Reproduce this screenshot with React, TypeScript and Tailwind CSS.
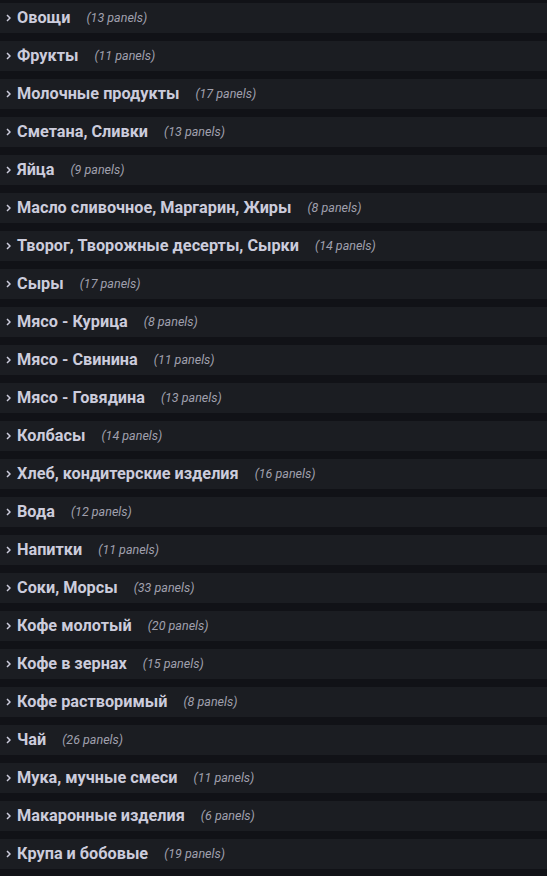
const rows: [string, number][] = [
  ["Овощи", 13],
  ["Фрукты", 11],
  ["Молочные продукты", 17],
  ["Сметана, Сливки", 13],
  ["Яйца", 9],
  ["Масло сливочное, Маргарин, Жиры", 8],
  ["Творог, Творожные десерты, Сырки", 14],
  ["Сыры", 17],
  ["Мясо - Курица", 8],
  ["Мясо - Свинина", 11],
  ["Мясо - Говядина", 13],
  ["Колбасы", 14],
  ["Хлеб, кондитерские изделия", 16],
  ["Вода", 12],
  ["Напитки", 11],
  ["Соки, Морсы", 33],
  ["Кофе молотый", 20],
  ["Кофе в зернах", 15],
  ["Кофе растворимый", 8],
  ["Чай", 26],
  ["Мука, мучные смеси", 11],
  ["Макаронные изделия", 6],
  ["Крупа и бобовые", 19],
];

export default function App() {
  return (
    <div
      className="min-h-[876px] w-full bg-[#111217] pt-[3px] flex flex-col gap-2"
      style={{ fontFamily: "Roboto, 'Noto Sans', sans-serif" }}
    >
      {rows.map(([title, count]) => (
        <div key={title} className="h-[30px] bg-[#1b1d22] flex items-center pl-[6px]">
          <svg width="5" height="8" viewBox="0 0 5 8" className="shrink-0">
            <path d="M1 1 L4 4 L1 7" stroke="#ccccdc" strokeWidth="1.5" fill="none" />
          </svg>
          <span className="ml-[6px] pt-px text-[16.25px] font-bold text-[#ccccdc] leading-none">{title}</span>
          <span className="ml-4 pt-px text-[12.5px] italic text-[#a0a0ae] leading-none">({count} panels)</span>
        </div>
      ))}
    </div>
  );
}
